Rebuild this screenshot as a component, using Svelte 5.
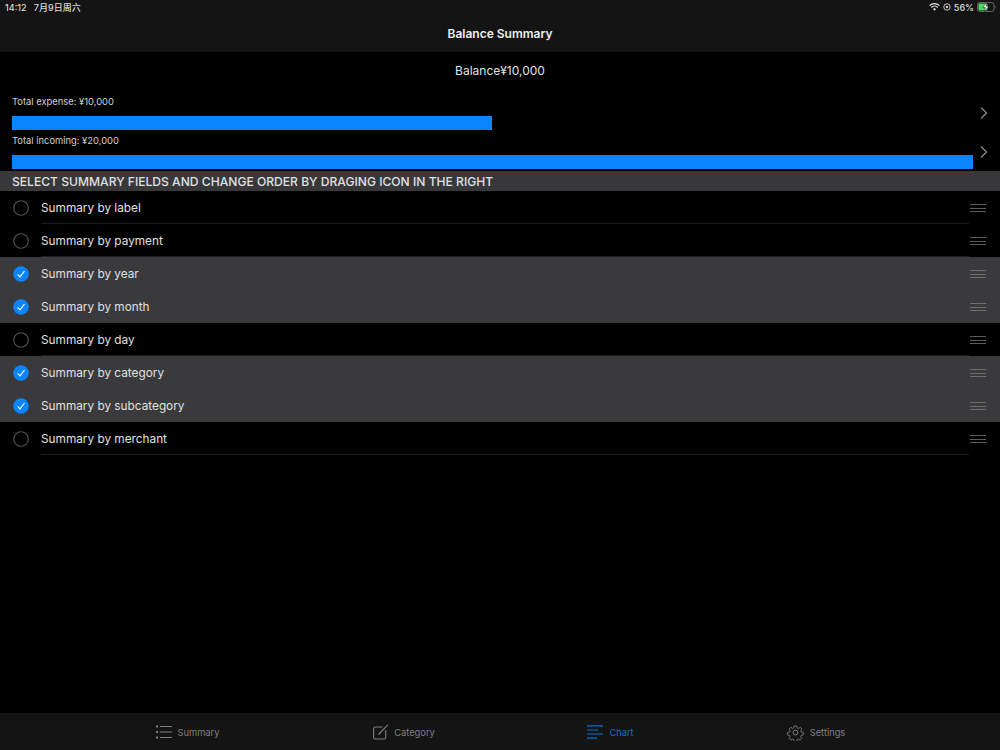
<script>
  const fields = [
    { label: 'Summary by label', on: false },
    { label: 'Summary by payment', on: false },
    { label: 'Summary by year', on: true },
    { label: 'Summary by month', on: true },
    { label: 'Summary by day', on: false },
    { label: 'Summary by category', on: true },
    { label: 'Summary by subcategory', on: true },
    { label: 'Summary by merchant', on: false }
  ];
  const totals = [
    { label: 'Total expense: ¥10,000', width: 49.9 },
    { label: 'Total incoming: ¥20,000', width: 100 }
  ];
</script>

<div class="page">
  <header class="top">
    <div class="status">
      <span class="clock">14:12&nbsp;&nbsp; 7月9日周六</span>
      <div class="sys">
        <svg width="11" height="8" viewBox="0 0 12 9"><path d="M6 8.6 4.3 6.8a2.4 2.4 0 0 1 3.4 0zM2.9 5.5l-1-1a5.8 5.8 0 0 1 8.2 0l-1 1a4.4 4.4 0 0 0-6.2 0zM.9 3.4 0 2.5a8.5 8.5 0 0 1 12 0l-.9.9a7.2 7.2 0 0 0-10.2 0z" fill="#e4e4e4"/></svg>
        <svg width="8" height="8" viewBox="0 0 9 9"><circle cx="4.5" cy="4.5" r="3.6" fill="none" stroke="#c8c8c8" stroke-width="1.1"/><circle cx="4.5" cy="4.5" r="1.4" fill="#c8c8c8"/></svg>
        <span>56%</span>
        <svg width="20" height="10" viewBox="0 0 20 10"><rect x=".5" y=".5" width="16.5" height="9" rx="2.4" fill="none" stroke="#666"/><rect x="1.5" y="1.5" width="9" height="7" rx="1" fill="#4cd964"/><path d="M18 3.4c.9.3.9 2.9 0 3.2z" fill="#666"/><path d="M10 0 5.8 5.6h2.6L7.4 10l4.4-5.8H9.2z" fill="#fff" stroke="#111" stroke-width=".5"/></svg>
      </div>
    </div>
    <h1>Balance Summary</h1>
  </header>

  <div class="balance">Balance¥10,000</div>

  <section class="totals">
    {#each totals as t}
      <div class="total">
        <div class="total-main">
          <div class="total-label">{t.label}</div>
          <div class="track"><div class="bar" style="width: {t.width}%"></div></div>
        </div>
        <svg class="chev" width="8" height="14" viewBox="0 0 8 14"><path d="M1 1.5 6.5 7 1 12.5" fill="none" stroke="#8a8a8a" stroke-width="1.3"/></svg>
      </div>
    {/each}
  </section>

  <div class="section-head">SELECT SUMMARY FIELDS AND CHANGE ORDER BY DRAGING ICON IN THE RIGHT</div>

  <ul class="fields">
    {#each fields as f}
      <li class="field" class:on={f.on}>
        <span class="check">
          {#if f.on}
            <svg width="16" height="16" viewBox="0 0 16 16"><circle cx="8" cy="8" r="7.8" fill="#0a84ff"/><path d="M4.6 8.3 7 10.8 11.5 5" fill="none" stroke="#fff" stroke-width="1.1"/></svg>
          {:else}
            <svg width="16" height="16" viewBox="0 0 16 16"><circle cx="8" cy="8" r="7.3" fill="none" stroke="#555" stroke-width="1.1"/></svg>
          {/if}
        </span>
        <div class="field-body">
          <span class="field-label">{f.label}</span>
          <span class="grip"><i></i><i></i><i></i></span>
        </div>
      </li>
    {/each}
  </ul>

  <nav class="tabs">
    <div class="tab">
      <svg width="16" height="14" viewBox="0 0 16 14" fill="none" stroke="#7f7f7f"><path d="M4 1.5h12M4 7h12M4 12.5h12" /><path d="M0 1.5h2M0 7h2M0 12.5h2" stroke-width="1.8"/></svg>
      <span>Summary</span>
    </div>
    <div class="tab tight">
      <svg width="16" height="16" viewBox="0 0 16 16" fill="none" stroke="#7f7f7f" stroke-width="1.1"><path d="M9.5 3H2a1.4 1.4 0 0 0-1.4 1.4v9.2A1.4 1.4 0 0 0 2 15h9.3a1.4 1.4 0 0 0 1.4-1.4V6"/><path d="M5.5 10.5 14.8.8"/></svg>
      <span>Category</span>
    </div>
    <div class="tab active">
      <svg width="16" height="14" viewBox="0 0 16 14" fill="none" stroke="#0a6fd6" stroke-width="1.2"><path d="M0 .8h16M0 5h11M0 9h16M0 13.2h10"/></svg>
      <span>Chart</span>
    </div>
    <div class="tab">
      <svg width="17" height="17" viewBox="0 0 24 24" fill="none" stroke="#7f7f7f" stroke-width="1.4"><circle cx="12" cy="12" r="3.4"/><path d="M10 1.5h4l.6 3 2.3 1 2.6-1.7 2.8 2.8-1.7 2.6 1 2.3 2.9.5v4l-3 .6-1 2.3 1.7 2.6-2.8 2.8-2.6-1.7-2.2 1-.6 3h-4l-.6-3-2.3-1-2.6 1.7-2.8-2.8 1.7-2.6-1-2.3-3-.6v-4l3-.5 1-2.3-1.7-2.6 2.8-2.8 2.6 1.7 2.3-1z" transform="translate(1.4 1.4) scale(.88)"/></svg>
      <span>Settings</span>
    </div>
  </nav>
</div>

<style>
  :global(body) {
    margin: 0;
    background: #000;
  }

  .page {
    width: 1000px;
    height: 750px;
    display: flex;
    flex-direction: column;
    background: #000;
    color: #e0e0e0;
    font-family: Inter, "Noto Sans CJK SC", sans-serif;
    overflow: hidden;
  }

  .top {
    height: 52px;
    background: #141414;
    flex: none;
  }
  .status {
    height: 14px;
    padding: 0 3px 0 5px;
    display: flex;
    justify-content: space-between;
    align-items: center;
    font-size: 9px;
    font-weight: 500;
    color: #d8d8d8;
  }
  .sys {
    display: flex;
    align-items: center;
    gap: 3px;
  }
  h1 {
    margin: 12px 0 0;
    font-size: 12px;
    line-height: 16px;
    font-weight: 600;
    text-align: center;
    color: #efefef;
  }

  .balance {
    height: 37px;
    flex: none;
    display: flex;
    align-items: center;
    justify-content: center;
    font-size: 12px;
  }

  .totals {
    padding-left: 12px;
    flex: none;
    height: 82px;
  }
  .total {
    display: flex;
    align-items: flex-start;
    height: 39px;
  }
  .total-main {
    width: 961px;
    flex: none;
  }
  .total-label {
    font-size: 9.4px;
    line-height: 12px;
    margin-bottom: 8px;
    padding-top: 7px;
    color: #d0d0d0;
  }
  .track {
    height: 14px;
  }
  .bar {
    height: 100%;
    background: #0a84ff;
  }
  .chev {
    margin: 17px 0 0 7px;
  }

  .section-head {
    height: 20px;
    flex: none;
    display: flex;
    align-items: center;
    padding-left: 12px;
    background: #38383a;
    font-size: 12.1px;
    font-weight: 500;
  }

  .fields {
    list-style: none;
    margin: 0;
    padding: 0;
  }
  .field {
    height: 33px;
    display: flex;
    align-items: stretch;
  }
  .field.on {
    background: #3a3a3c;
  }
  .check {
    width: 41px;
    flex: none;
    padding-left: 12.5px;
    box-sizing: border-box;
    display: flex;
    align-items: center;
  }
  .field-body {
    flex: 1;
    display: flex;
    align-items: center;
    justify-content: space-between;
    padding-top: 2px;
    font-size: 11.8px;
    margin-right: 31px;
    border-bottom: 1px solid #1c1c1c;
  }
  .field.on .field-body {
    border-bottom-color: transparent;
  }
  .grip {
    display: flex;
    flex-direction: column;
    gap: 2.5px;
    margin-right: -17px;
  }
  .grip i {
    display: block;
    width: 16px;
    height: 1px;
    background: #5c5c5c;
  }
  .field.on .grip i {
    background: #6e6e6e;
  }

  .tabs {
    margin-top: auto;
    height: 37px;
    box-sizing: border-box;
    padding-top: 1px;
    flex: none;
    display: grid;
    grid-template-columns: 205px 227px 187px 224px;
    justify-content: start;
    padding-left: 85px;
    background: #141414;
    font-size: 9.3px;
    color: #7f7f7f;
  }
  .tab {
    display: flex;
    align-items: center;
    justify-content: center;
    gap: 6px;
  }
  .tab.tight {
    gap: 5px;
    padding-left: 1px;
  }
  .tab.active {
    color: #0a6fd6;
  }
</style>
